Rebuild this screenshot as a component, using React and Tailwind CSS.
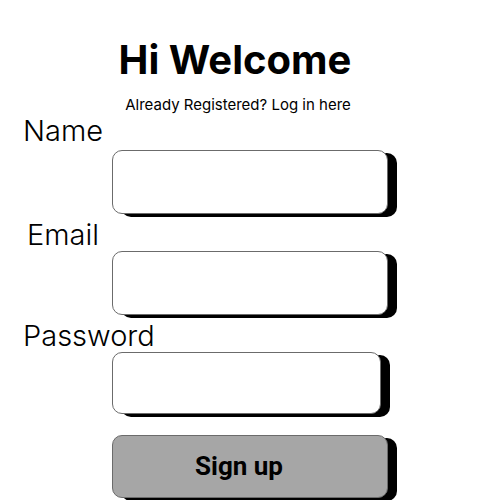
export default function App() {
  const box =
    "ml-[112px] rounded-[10px] border border-[#6b6b6b] bg-white shadow-[9px_3px_0_0_#000]";
  return (
    <div className="w-[500px] h-[500px] bg-white overflow-hidden font-['Inter',sans-serif] text-black">
      <h1 className="pt-[38px] text-center text-[40px] leading-[44px] font-bold pr-[30px]">
        Hi Welcome
      </h1>
      <p className="mt-[13px] text-center text-[15px] leading-[20px] pr-[24px]">
        Already Registered? Log in here
      </p>

      <label className="block ml-[23px] text-[29px] leading-[32px] font-light">Name</label>
      <div className={`${box} mt-[3px] w-[276px] h-[64px]`} />

      <label className="block mt-[5px] ml-[27px] text-[29px] leading-[32px] font-light">Email</label>
      <div className={`${box} w-[276px] h-[64px]`} />

      <label className="block mt-[5px] ml-[23px] text-[29px] leading-[32px] font-light">Password</label>
      <div className={`${box} w-[269px] h-[62px] shadow-[8px_3px_0_0_#000]`} />

      <button className="mt-[21px] ml-[112px] w-[276px] h-[63px] rounded-[10px] border border-[#6b6b6b] bg-[#a6a6a6] shadow-[9px_3px_0_0_#000] flex items-center justify-center pr-[22px] font-['Roboto',sans-serif] font-bold text-[26px]">
        Sign up
      </button>
    </div>
  );
}
